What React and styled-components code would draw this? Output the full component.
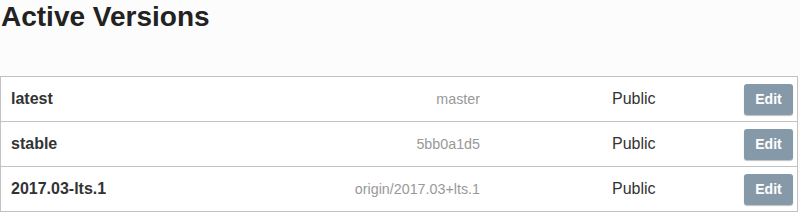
import styled, { createGlobalStyle } from 'styled-components'

const GlobalStyle = createGlobalStyle`
  html, body {
    margin: 0;
    padding: 0;
    background: #fcfcfc;
    font-family: 'Liberation Sans', Arial, sans-serif;
    color: #333;
  }
`

const Page = styled.div`
  width: 800px;
  padding-top: 1px;
`

const Title = styled.h1`
  margin: 0 0 43px 1px;
  font-size: 28px;
  line-height: 32px;
  font-weight: 700;
  color: #222;
`

const Table = styled.div`
  width: 798px;
  box-sizing: border-box;
  border: 1px solid #c2c2c2;
  background: #fff;
`

const Row = styled.div`
  display: grid;
  grid-template-columns: 340px 140px 1fr auto;
  align-items: center;
  height: 44px;
  border-top: ${(props) => (props.$first ? 'none' : '1px solid #c2c2c2')};
`

const Name = styled.div`
  padding-left: 10px;
  font-size: 16px;
  font-weight: 700;
  color: #333;
`

const Ref = styled.div`
  text-align: right;
  padding-right: 1px;
  font-size: 14.3px;
  color: #999;
`

const Status = styled.div`
  padding-left: 131px;
  font-size: 16px;
  color: #333;
`

const EditButton = styled.button`
  margin-right: 4px;
  width: 49px;
  height: 31px;
  border: none;
  border-radius: 3px;
  background: #8699a8;
  box-shadow: 0 1px 1px rgba(0, 0, 0, 0.25);
  color: #fff;
  font-family: 'Liberation Sans', Arial, sans-serif;
  font-size: 14px;
  font-weight: 700;
  padding: 0;
  cursor: pointer;
`

const versions = [
  { name: 'latest', ref: 'master', status: 'Public' },
  { name: 'stable', ref: '5bb0a1d5', status: 'Public' },
  { name: '2017.03-lts.1', ref: 'origin/2017.03+lts.1', status: 'Public' },
]

export default function App() {
  return (
    <Page>
      <GlobalStyle />
      <Title>Active Versions</Title>
      <Table>
        {versions.map((v, i) => (
          <Row key={v.name} $first={i === 0}>
            <Name>{v.name}</Name>
            <Ref>{v.ref}</Ref>
            <Status>{v.status}</Status>
            <EditButton>Edit</EditButton>
          </Row>
        ))}
      </Table>
    </Page>
  )
}
